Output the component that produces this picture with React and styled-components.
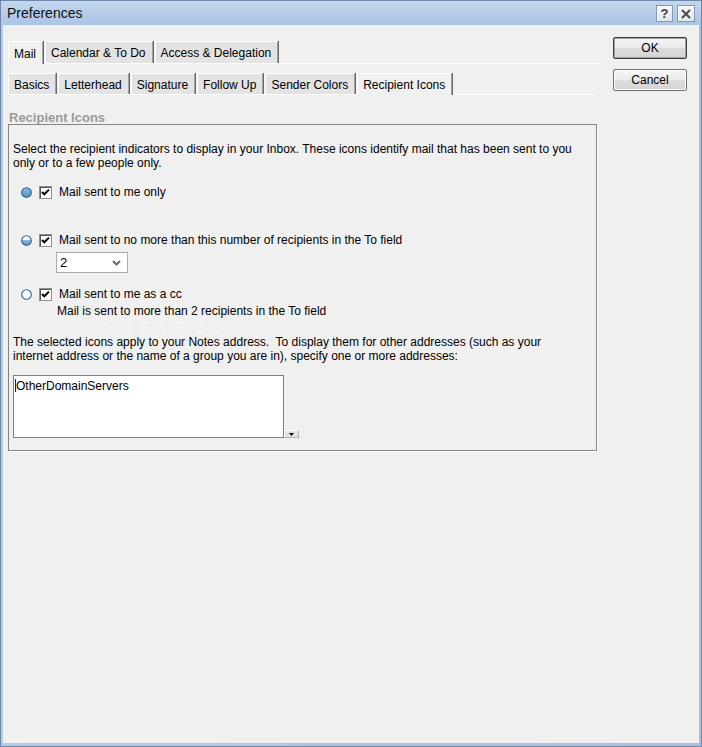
import React from "react";
import styled, { createGlobalStyle } from "styled-components";

const Global = createGlobalStyle`
  html, body { margin: 0; padding: 0; background: #f0f0f0; }
  body { font-family: "Liberation Sans", Arial, sans-serif; font-size: 12px; color: #000; }
  * { box-sizing: border-box; }
`;

const Window = styled.div`
  position: relative;
  width: 702px;
  height: 747px;
  display: flex;
  flex-direction: column;
  background: linear-gradient(to right, #b3cbe7, #a6c0df);
  border: 1px solid #6f87aa;
  overflow: hidden;
`;

const TitleBar = styled.div`
  height: 24px;
  display: flex;
  align-items: center;
  padding: 0 6px 0 6px;
  background: linear-gradient(to bottom, #c3d8ee 0%, #b6cde8 50%, #abc5e3 100%);
`;

const Title = styled.div`
  flex: 1;
  font-size: 14px;
  color: #111;
`;

const CaptionButtons = styled.div`
  display: flex;
  gap: 4px;
  margin-top: 1px;
`;

const CaptionButton = styled.div`
  width: ${(p) => p.$w || 17}px;
  height: 17px;
  display: flex;
  align-items: center;
  justify-content: center;
  background: linear-gradient(to bottom, #f4f7fb, #dfe7f1);
  border: 1px solid #8297b3;
  box-shadow: inset 1px 1px 0 #ffffff;
  font-weight: bold;
  font-size: 13px;
  color: #3a3a3a;
`;

const Body = styled.div`
  flex: 1;
  margin: 0 2px 3px 2px;
  background: #f0f0f0;
  display: flex;
  align-items: flex-start;
  padding: 12px 11px 0 5px;
`;

const Main = styled.div`
  width: 594px;
  margin-top: 4px;
  display: flex;
  flex-direction: column;
`;

const TabBar = styled.div`
  display: flex;
  align-items: flex-end;
  gap: 1px;
  height: ${(p) => p.$h + 1}px;
  width: ${(p) => p.$w}px;
  margin-top: ${(p) => p.$mt || 0}px;
  border-bottom: 1px solid #ffffff;
`;

const Tab = styled.div`
  height: ${(p) => (p.$active ? p.$h + 1 : p.$h)}px;
  align-self: flex-start;
  display: flex;
  align-items: center;
  padding: 1px 6px 0 5px;
  background: ${(p) => (p.$active ? "#f0f0f0" : "#e3e3e3")};
  border-top: 1px solid #ffffff;
  border-left: 1px solid #ffffff;
  border-right: 1px solid #a0a0a0;
  box-shadow: 1px 0 0 #696969;
  margin-right: 1px;
  position: relative;
  z-index: ${(p) => (p.$active ? 1 : 0)};
  white-space: nowrap;
`;

const GroupLabel = styled.div`
  margin: 16px 0 0 1px;
  line-height: 13px;
  font-size: 13px;
  font-weight: bold;
  color: #9a9a9a;
`;

const GroupBox = styled.div`
  width: 589px;
  border: 1px solid #858585;
  box-shadow: 1px 1px 0 #ffffff;
  padding: 17px 4px 12px 4px;
  display: flex;
  flex-direction: column;
  position: relative;
`;

const Para = styled.p`
  margin: ${(p) => p.$mt || 0}px 0 0 0;
  line-height: 14px;
  white-space: pre-wrap;
  position: relative;
  z-index: 1;
`;

const OptionRow = styled.div`
  display: flex;
  align-items: center;
  height: 14px;
  margin-top: ${(p) => p.$mt}px;
  padding-left: 8px;
  gap: 7px;
`;

const Indented = styled.div`
  margin-left: ${(p) => p.$ml || 44}px;
  margin-top: ${(p) => p.$mt || 0}px;
  line-height: 14px;
`;

const CheckBox = styled.span`
  width: 13px;
  height: 13px;
  display: inline-flex;
  align-items: center;
  justify-content: center;
  background: #ffffff;
  border: 1px solid #8f8f8f;
  box-shadow: inset 1px 1px 0 #555555;
`;

const Select = styled.div`
  width: 72px;
  height: 21px;
  margin-left: 43px;
  margin-top: 5px;
  background: #ffffff;
  border: 1px solid #acacac;
  display: flex;
  align-items: center;
  justify-content: space-between;
  padding: 0 6px 0 3px;
  font-size: 13px;
`;

const AddrRow = styled.div`
  display: flex;
  align-items: flex-end;
  margin-top: 12px;
`;

const AddrBox = styled.div`
  width: 271px;
  height: 63px;
  background: #ffffff;
  border: 1px solid #7f7f7f;
  padding: 3px 1px;
  line-height: 14px;
  display: flex;
  align-items: flex-start;
`;

const Caret = styled.span`
  width: 1px;
  height: 13px;
  background: #1a1a6a;
`;

const MiniDrop = styled.div`
  width: 15px;
  height: 8px;
  background: #e2e2e2;
  border: 1px solid #b5b5b5;
  border-left-color: #ffffff;
  border-top-color: #ffffff;
  display: flex;
  align-items: center;
  justify-content: center;
`;

const ButtonCol = styled.div`
  margin-left: 11px;
  display: flex;
  flex-direction: column;
  gap: 10px;
`;

const DlgButton = styled.div`
  width: 74px;
  height: 22px;
  display: flex;
  align-items: center;
  justify-content: center;
  font-size: 12px;
  background: linear-gradient(to bottom, #f6f6f6 0%, #ebebeb 50%, #dddddd 51%, #d4d4d4 100%);
  border: 1px solid ${(p) => (p.$default ? "#3c3c3c" : "#707070")};
  box-shadow: inset 0 0 0 1px ${(p) => (p.$default ? "#a0a0a0" : "#fcfcfc")};
  border-radius: 2px;
`;

const Watermark = styled.div`
  position: absolute;
  left: 94px;
  top: 194px;
  font-size: 14px;
  line-height: 16px;
  font-weight: bold;
  letter-spacing: 9px;
  color: #f6f6f6;
  text-shadow: 0 0 1px #e0e0e0;
  pointer-events: none;
  z-index: 0;
`;

const Radio = ({ kind }) => (
  <svg width="11" height="11" viewBox="0 0 11 11">
    <defs>
      <linearGradient id={`rg-${kind}`} x1="0" y1="0" x2="0" y2="1">
        {kind === "full" && (
          <>
            <stop offset="0" stopColor="#8cc0e4" />
            <stop offset="1" stopColor="#4e92c6" />
          </>
        )}
        {kind === "half" && (
          <>
            <stop offset="0" stopColor="#ffffff" />
            <stop offset="0.5" stopColor="#ffffff" />
            <stop offset="0.5" stopColor="#8ab6da" />
            <stop offset="1" stopColor="#5c94c8" />
          </>
        )}
        {kind === "empty" && (
          <>
            <stop offset="0" stopColor="#ffffff" />
            <stop offset="1" stopColor="#ffffff" />
          </>
        )}
      </linearGradient>
    </defs>
    <circle cx="5.5" cy="5.5" r="4.8" fill={`url(#rg-${kind})`} stroke="#2f5a98" strokeWidth="1.1" />
  </svg>
);

const Check = () => (
  <svg width="9" height="9" viewBox="0 0 9 9">
    <path d="M1 4 L3.3 6.3 L8 1.6" fill="none" stroke="#000" strokeWidth="2" />
  </svg>
);

const Option = ({ kind, label, mt }) => (
  <OptionRow $mt={mt}>
    <Radio kind={kind} />
    <CheckBox>
      <Check />
    </CheckBox>
    <span>{label}</span>
  </OptionRow>
);

export default function App() {
  return (
    <>
      <Global />
      <Window>
        <TitleBar>
          <Title>Preferences</Title>
          <CaptionButtons>
            <CaptionButton>?</CaptionButton>
            <CaptionButton $w={18}>
              <svg width="10" height="10" viewBox="0 0 10 10">
                <path d="M1 1 L9 9 M9 1 L1 9" stroke="#4a4a4a" strokeWidth="2" />
              </svg>
            </CaptionButton>
          </CaptionButtons>
        </TitleBar>
        <Body>
          <Main>
            <TabBar $w={594} $h={22}>
              <Tab $h={22} $active>Mail</Tab>
              <Tab $h={22}>Calendar &amp; To Do</Tab>
              <Tab $h={22}>Access &amp; Delegation</Tab>
            </TabBar>
            <TabBar $w={588} $h={21} $mt={9}>
              <Tab $h={21}>Basics</Tab>
              <Tab $h={21}>Letterhead</Tab>
              <Tab $h={21}>Signature</Tab>
              <Tab $h={21}>Follow Up</Tab>
              <Tab $h={21}>Sender Colors</Tab>
              <Tab $h={21} $active>Recipient Icons</Tab>
            </TabBar>
            <GroupLabel>Recipient Icons</GroupLabel>
            <GroupBox>
              <Para>
                Select the recipient indicators to display in your Inbox. These icons identify mail that has been sent to you
                {"\n"}only or to a few people only.
              </Para>
              <Option kind="full" mt={15} label="Mail sent to me only" />
              <Option kind="half" mt={34} label="Mail sent to no more than this number of recipients in the To field" />
              <Select>
                <span>2</span>
                <svg width="9" height="6" viewBox="0 0 9 6">
                  <path d="M1 1 L4.5 4.5 L8 1" fill="none" stroke="#6a6a6a" strokeWidth="2" />
                </svg>
              </Select>
              <Option kind="empty" mt={14} label="Mail sent to me as a cc" />
              <Indented $mt={3}>Mail is sent to more than 2 recipients in the To field</Indented>
              <Para $mt={17}>
                {"The selected icons apply to your Notes address.  To display them for other addresses (such as your\ninternet address or the name of a group you are in), specify one or more addresses:"}
              </Para>
              <AddrRow>
                <AddrBox>
                  <Caret />
                  <span>OtherDomainServers</span>
                </AddrBox>
                <MiniDrop>
                  <svg width="5" height="3" viewBox="0 0 5 3">
                    <path d="M0 0 L5 0 L2.5 3 Z" fill="#000" />
                  </svg>
                </MiniDrop>
              </AddrRow>
              <Watermark>SOFTPEDIA</Watermark>
            </GroupBox>
          </Main>
          <ButtonCol>
            <DlgButton $default>OK</DlgButton>
            <DlgButton>Cancel</DlgButton>
          </ButtonCol>
        </Body>
      </Window>
    </>
  );
}
